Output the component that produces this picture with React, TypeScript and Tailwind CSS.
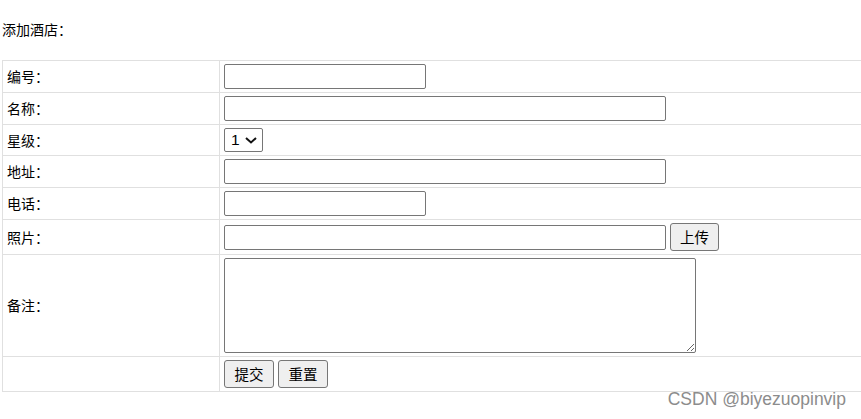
import { useState } from "react";

const cjk = { fontFamily: "'Noto Sans CJK SC', 'Microsoft YaHei', sans-serif" };

const inputCls = "h-[25px] border border-[#767676] rounded-[2px] bg-white px-[2px] text-[14px] outline-none";
const btnCls = "h-[28px] px-[9px] border border-[#767676] rounded-[3px] bg-[#efefef] text-[14.5px] text-black leading-none";

export default function App() {
  const [star, setStar] = useState("1");

  return (
    <div className="relative w-[861px] h-[419px] overflow-hidden bg-white text-black text-[14px]" style={cjk}>
      {/* title */}
      <div className="h-[60px] pl-[2px] pt-[19px] leading-[20px]">添加酒店：</div>

      <table className="ml-[2px] w-[880px] border-collapse">
        <tbody>
          <tr className="h-[32px]">
            <td className="w-[217px] border border-[#e0e0e0] px-1 py-[3px]">编号：</td>
            <td className="border border-[#e0e0e0] px-1 py-[3px]">
              <input className={`${inputCls} w-[202px] block`} />
            </td>
          </tr>
          <tr className="h-[32px]">
            <td className="border border-[#e0e0e0] px-1 py-[3px]">名称：</td>
            <td className="border border-[#e0e0e0] px-1 py-[3px]">
              <input className={`${inputCls} w-[442px] block`} />
            </td>
          </tr>
          <tr className="h-[31px]">
            <td className="border border-[#e0e0e0] px-1 py-[3px]">星级：</td>
            <td className="border border-[#e0e0e0] px-1 py-[3px]">
              <div className="relative w-[39px] h-[24px]">
                <select
                  value={star}
                  onChange={e => setStar(e.target.value)}
                  className="block appearance-none h-[24px] w-[39px] border border-[#767676] rounded-[2px] bg-white pl-[6px] text-[15.5px] leading-none outline-none"
                  style={{ fontFamily: "'Liberation Sans', Arial, sans-serif" }}
                >
                  <option>1</option>
                  <option>2</option>
                  <option>3</option>
                  <option>4</option>
                  <option>5</option>
                </select>
                <svg
                  className="pointer-events-none absolute left-[21px] top-[9px]"
                  width="12" height="7" viewBox="0 0 12 7" fill="none"
                >
                  <path d="M1 1l5 4.5L11 1" stroke="#111" strokeWidth="2" />
                </svg>
              </div>
            </td>
          </tr>
          <tr className="h-[32px]">
            <td className="border border-[#e0e0e0] px-1 py-[3px]">地址：</td>
            <td className="border border-[#e0e0e0] px-1 py-[3px]">
              <input className={`${inputCls} w-[442px] block`} />
            </td>
          </tr>
          <tr className="h-[32px]">
            <td className="border border-[#e0e0e0] px-1 py-[3px]">电话：</td>
            <td className="border border-[#e0e0e0] px-1 py-[3px]">
              <input className={`${inputCls} w-[202px] block`} />
            </td>
          </tr>
          <tr className="h-[35px]">
            <td className="border border-[#e0e0e0] px-1 py-[3px]">照片：</td>
            <td className="border border-[#e0e0e0] px-1 py-[3px]">
              <div className="flex items-center gap-[4px]">
                <input className={`${inputCls} w-[442px]`} />
                <button className={btnCls} style={cjk}>上传</button>
              </div>
            </td>
          </tr>
          <tr className="h-[102px]">
            <td className="border border-[#e0e0e0] px-1 py-[3px]">备注：</td>
            <td className="border border-[#e0e0e0] px-1 py-[3px]">
              <textarea className="block w-[472px] h-[95px] border border-[#767676] rounded-[2px] bg-white outline-none" />
            </td>
          </tr>
          <tr className="h-[35px]">
            <td className="border border-[#e0e0e0] px-1 py-[3px]"></td>
            <td className="border border-[#e0e0e0] px-1 py-[3px]">
              <div className="flex items-center gap-[4px]">
                <button className={`${btnCls} w-[50px] px-0`} style={cjk}>提交</button>
                <button className={`${btnCls} w-[50px] px-0`} style={cjk}>重置</button>
              </div>
            </td>
          </tr>
        </tbody>
      </table>

      {/* watermark */}
      <div
        className="absolute right-[15px] top-[389px] leading-[20px] text-[17.5px] text-[#8c8c8c]"
        style={{ fontFamily: "'Liberation Sans', Arial, sans-serif" }}
      >
        CSDN @biyezuopinvip
      </div>
    </div>
  );
}
